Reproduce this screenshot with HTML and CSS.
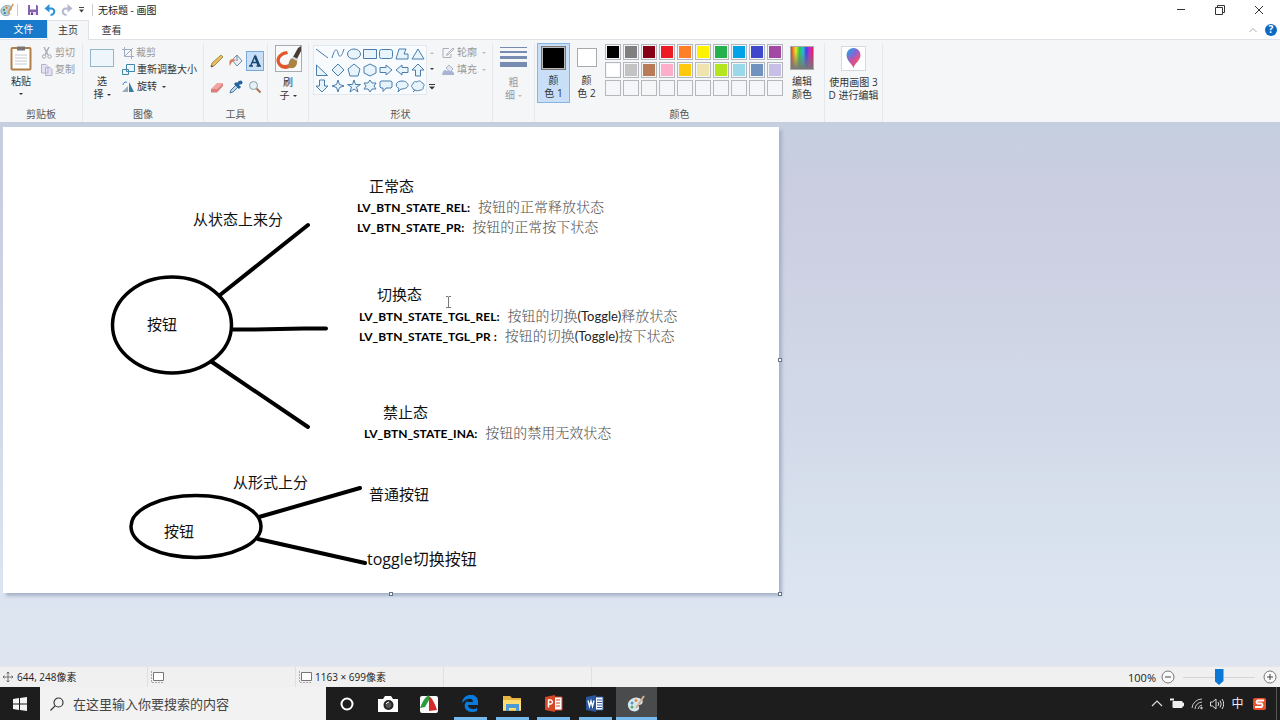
FILE: index.html
```html
<!DOCTYPE html>
<html lang="zh-CN">
<head>
<meta charset="utf-8">
<title>无标题 - 画图</title>
<link rel="stylesheet" href="styles.css">
</head>
<body>
<header class="titlebar">
  <svg class="app-icon" width="14" height="14" viewBox="0 0 16 16"><path d="M1 9C1 5 6 2 10 3c4 1 4 5 1 5.500s-1 2 0 3-1 3-4 3S1 13 1 9z" fill="#b9d3dc" stroke="#7e9ca8"/><circle cx="4.500" cy="8" r="1.300" fill="#4a9b51"/><circle cx="7.500" cy="5.500" r="1.300" fill="#e08a35"/><circle cx="5.500" cy="11.500" r="1.300" fill="#3a78c0"/><path d="M9 12 15 1" stroke="#d79a55" stroke-width="1.800"/></svg>
  <i class="bar"></i>
  <button class="quick" aria-label="保存"><svg width="12" height="12" viewBox="0 0 12 12"><path d="M1 1h9l1 1v9H1z" fill="#8460ad"/><path d="M3 1h6v4.500H3z" fill="#fff"/><path d="M3 8h6v3H3z" fill="#e5dced"/><path d="M4 8.500h2V11H4z" fill="#60408c"/></svg></button>
  <button class="quick" aria-label="撤消"><svg width="12" height="12" viewBox="0 0 12 12"><path d="M2.500 4.500h4.500c4.500 0 4.500 6-.5 6.500" fill="none" stroke="#2d92d6" stroke-width="2"/><path d="M5.500 0 .5 4.500l5 4z" fill="#2d92d6"/></svg></button>
  <button class="quick" aria-label="重做"><svg width="12" height="12" viewBox="0 0 12 12"><path d="M9.500 4.500H5c-4.500 0-4.500 6 .5 6.500" fill="none" stroke="#b4b8d0" stroke-width="2"/><path d="m6.500 0 5 4.500-5 4z" fill="#b4b8d0"/></svg></button>
  <button class="quick more" aria-label="自定义快速访问工具栏"><svg width="5" height="6" viewBox="0 0 5 6"><path d="M0 .5h5" stroke="#444"/><path d="M0 2.500h5L2.500 5.500z" fill="#444"/></svg></button>
  <i class="bar"></i>
  <h1>无标题 - 画图</h1>
  <div class="window-buttons">
    <button aria-label="最小化"><svg width="10" height="10" viewBox="0 0 10 10"><path d="M1 4.500h8" stroke="#333"/></svg></button>
    <button aria-label="还原"><svg width="10" height="10" viewBox="0 0 10 10" fill="none" stroke="#333"><path d="M.5 2.500h7v7h-7zM2.500 2.500v-2h7v7h-2"/></svg></button>
    <button aria-label="关闭"><svg width="10" height="10" viewBox="0 0 10 10"><path d="m1 1 8 8M9 1 1 9" stroke="#333"/></svg></button>
  </div>
</header>
<nav class="tabs">
  <button class="tab file">文件</button>
  <button class="tab active">主页</button>
  <button class="tab">查看</button>
  <div class="tab-tools">
    <button aria-label="折叠功能区"><svg width="8" height="6" viewBox="0 0 8 6"><path d="m.5 5 3.500-3.500L7.500 5" fill="none" stroke="#aaa"/></svg></button>
    <button class="help" aria-label="帮助">?</button>
  </div>
</nav>
<section class="ribbon">
  <div class="group clipboard">
    <div class="tools">
      <button class="big"><svg width="24" height="26" viewBox="0 0 24 26"><rect x="2.500" y="3" width="19" height="21.500" rx="1" fill="#fff" stroke="#b08048" stroke-width="2"/><path d="M8 1.500h8v4H8z" fill="#777"/><path d="M6 10h12M6 13h12M6 16h12M6 19h12" stroke="#c6cbd2"/></svg>粘贴<i class="caret"></i></button>
      <div class="stack">
        <button class="row off"><svg width="12" height="12" viewBox="0 0 12 12" fill="none" stroke="#a4a8b2"><path d="m3 0 4 8M8 0 4 8" stroke-width="1.300"/><circle cx="3" cy="9.500" r="1.700"/><circle cx="8.500" cy="9.500" r="1.700"/></svg>剪切</button>
        <button class="row off"><svg width="12" height="12" viewBox="0 0 12 12" fill="#e4e2f0" stroke="#b4b0cf"><path d="M.5.500H5l2 2V9H.5zM4.500 3.500H9l2 2v6H4.500z"/></svg>复制</button>
      </div>
    </div>
    <h2>剪贴板</h2>
  </div>
  <div class="group image">
    <div class="tools">
      <button class="big"><svg width="24" height="26" viewBox="0 0 24 26"><rect x=".5" y="4.500" width="23" height="17" fill="#eef5fb" stroke="#34779c" stroke-dasharray="1 1"/></svg>选<span>择<i class="caret"></i></span></button>
      <div class="stack">
        <button class="row off"><svg width="12" height="12" viewBox="0 0 12 12" fill="none" stroke="#9fabc0"><path d="M2.500 0v9.500H12M0 2.500h9.500V12M3 9l8-8"/></svg>裁剪</button>
        <button class="row"><svg width="13" height="12" viewBox="0 0 13 12" fill="#eaf5fb" stroke="#4186a8"><path d="M4.500.500h8v7h-8zM.5 5.500h6v5h-6z"/></svg>重新调整大小</button>
        <button class="row"><svg width="13" height="12" viewBox="0 0 13 12"><path d="M0 11h6V5z" fill="#9aaebb"/><path d="M7 11V1l5 10z" fill="#357f9d"/><path d="M1 4c0-2 1-3 4-3" fill="none" stroke="#3f7fca"/></svg>旋转<i class="caret"></i></button>
      </div>
    </div>
    <h2>图像</h2>
  </div>
  <div class="group draw">
    <div class="tools tool-grid">
      <button aria-label="铅笔"><svg width="14" height="14" viewBox="0 0 14 14"><path d="m1 13 1-4 9-8 2 2-9 9z" fill="#e6bd5b" stroke="#8b6832" stroke-width=".7"/><path d="m1 13 .6-2 1.400 1.300z" fill="#333"/></svg></button>
      <button aria-label="填充"><svg width="14" height="14" viewBox="0 0 14 14"><path d="m3 6 5-5 5 6-5 5z" fill="#e8eef3" stroke="#6f8da5"/><path d="M8 1v6" stroke="#6f8da5"/><path d="M3 5C0 6 0 9 1 12c1-3 2-5 7-6" fill="#d97c62"/></svg></button>
      <button class="selected" aria-label="文本"><svg width="14" height="14" viewBox="0 0 14 14"><path d="m2.500 12 4.500-10 4.500 10M4.500 8.500H9M1 12h4M8.500 12H13" fill="none" stroke="#174771" stroke-width="1.400"/><path d="m7 2 4 10" stroke="#174771" stroke-width="2.500"/></svg></button>
      <button aria-label="橡皮擦"><svg width="14" height="14" viewBox="0 0 14 14"><path d="m1 9 6-6h6l-6 6z" fill="#f2a4a0"/><path d="M1 9h6v3.500H1zM7 9l6-6v3l-6 6.500z" fill="#dc7e7c"/></svg></button>
      <button aria-label="颜色选取器"><svg width="14" height="14" viewBox="0 0 14 14"><path d="m1 13 1-3 5-5 2 2-5 5z" fill="#b9d9ee" stroke="#52789a"/><path d="m6 3 5 5M8 5l3-3" stroke="#27639b" stroke-width="3"/><circle cx="11.500" cy="2.500" r="2" fill="#27639b"/></svg></button>
      <button aria-label="放大镜"><svg width="14" height="14" viewBox="0 0 14 14"><path d="m8.500 8.500 4 4" stroke="#a9744d" stroke-width="2"/><circle cx="5.500" cy="5.500" r="4" fill="#e5f1f8" stroke="#8e9ba5"/></svg></button>
    </div>
    <h2>工具</h2>
  </div>
  <div class="group brush">
    <div class="tools">
      <button class="big"><svg width="27" height="27" viewBox="0 0 27 27"><rect x=".5" y=".5" width="26" height="26" fill="#f8f9fb" stroke="#a5acb8"/><path d="M12 6C4 7 0 13 2 18c3 7 10 7 14 4l-2-3c-4 2-8 1-9-2-1-4 2-7 8-8z" fill="#e2572b"/><path d="M14 17c1-4 4-5 7-4 2 3 1 7-1 9s-6 1-7 0z" fill="#a98343"/><path d="M26 1v5l-4 8-4-2 5-9z" fill="#483b35"/><path d="m17.500 12.500 5 2.500" stroke="#cfd2d6" stroke-width="2"/></svg>刷<span>子<i class="caret"></i></span></button>
    </div>
  </div>
  <div class="group shapes">
    <div class="tools">
      <div class="gallery">
        <button aria-label="直线"><svg viewBox="0 0 14 14"><path d="m1 2 12 9"/></svg></button>
        <button aria-label="曲线"><svg viewBox="0 0 14 14"><path d="M1 11C4 0 6 2 7 6s3 6 6-4" fill="none"/></svg></button>
        <button aria-label="椭圆形"><svg viewBox="0 0 14 14"><ellipse cx="7" cy="7" rx="6.500" ry="5"/></svg></button>
        <button aria-label="矩形"><svg viewBox="0 0 14 14"><path d="M.5 2.500h13v9H.5z"/></svg></button>
        <button aria-label="圆角矩形"><svg viewBox="0 0 14 14"><rect x=".5" y="2.500" width="13" height="9" rx="2"/></svg></button>
        <button aria-label="多边形"><svg viewBox="0 0 14 14"><path d="M4 2h7L9 7h4v5H1z"/></svg></button>
        <button aria-label="三角形"><svg viewBox="0 0 14 14"><path d="m7 2 6 10H1z"/></svg></button>
        <button aria-label="直角三角形"><svg viewBox="0 0 14 14"><path d="M1.500 2v10.500h11z"/></svg></button>
        <button aria-label="菱形"><svg viewBox="0 0 14 14"><path d="m7 1 6 6-6 6-6-6z"/></svg></button>
        <button aria-label="五边形"><svg viewBox="0 0 14 14"><path d="m7 1 6 5-2 7H3L1 6z"/></svg></button>
        <button aria-label="六边形"><svg viewBox="0 0 14 14"><path d="m7 1 6 3v6l-6 3-6-3V4z"/></svg></button>
        <button aria-label="右箭头"><svg viewBox="0 0 14 14"><path d="M1 4.500h6V2l6 5-6 5V9.500H1z"/></svg></button>
        <button aria-label="左箭头"><svg viewBox="0 0 14 14"><path d="M13 4.500H7V2L1 7l6 5V9.500h6z"/></svg></button>
        <button aria-label="上箭头"><svg viewBox="0 0 14 14"><path d="M4.500 13V7H1l6-6 6 6H9.500v6z"/></svg></button>
        <button aria-label="下箭头"><svg viewBox="0 0 14 14"><path d="M4.500 1v6H1l6 6 6-6H9.500V1z"/></svg></button>
        <button aria-label="四角星"><svg viewBox="0 0 14 14"><path d="m7 1 1.500 4.500L13 7 8.500 8.500 7 13 5.500 8.500 1 7l4.500-1.500z"/></svg></button>
        <button aria-label="五角星"><svg viewBox="0 0 14 14"><path d="m7 1 1.500 4.500h5L9.500 8l1.500 5-4-3-4 3 1.500-5-4-2.500h5z"/></svg></button>
        <button aria-label="六角星"><svg viewBox="0 0 14 14"><path d="m7 1 2 3h4l-2 3 2 3H9l-2 3-2-3H1l2-3-2-3h4z"/></svg></button>
        <button aria-label="圆角矩形标注"><svg viewBox="0 0 14 14"><path d="M2 2h10l1 1v5l-1 1H7l-3 3.500V9H2L1 8V3z"/></svg></button>
        <button aria-label="椭圆形标注"><svg viewBox="0 0 14 14"><path d="M4 9.500C-1 7 1 2 7 2s8 5 4 7c-2 1-4 1-5 1l-3 3z"/></svg></button>
        <button aria-label="云形标注"><svg viewBox="0 0 14 14"><path d="M4 11c-2 0-2-1-2-2-2-1-2-3 0-4 0-2 2-3 4-2 2-2 4-1 5 1 2 0 3 3 1 4 1 2-1 3-3 3-1 1-4 1-5 0l-2 2z"/></svg></button>
      </div>
      <div class="scroll"><i class="caret up"></i><i class="caret"></i><svg width="6" height="6" viewBox="0 0 6 6"><path d="M0 .5h6" stroke="#333"/><path d="M0 2.500h6l-3 3z" fill="#333"/></svg></div>
      <div class="stack">
        <button class="row off"><svg width="13" height="12" viewBox="0 0 13 12" fill="none" stroke="#a9afb8"><path d="M7 1.500H1v9h8V7"/><path d="m4 8 7-7 1 1-6 6z"/></svg>轮廓<i class="caret"></i></button>
        <button class="row off"><svg width="13" height="12" viewBox="0 0 13 12"><path d="M0 11c1-5 3-6 5-4l3-2 4 4v2z" fill="#a7b4d4"/><path d="m4 4 3-3 4 4-3 3z" fill="#e2e5ee" stroke="#a7b4d4"/></svg>填充<i class="caret"></i></button>
      </div>
    </div>
    <h2>形状</h2>
  </div>
  <div class="group size">
    <div class="tools">
      <button class="big off"><svg width="27" height="27" viewBox="0 0 27 27" fill="#788bb0"><path d="M0 2h27v1H0zM0 6h27v2H0zM0 11h27v3H0zM0 17h27v5H0z"/></svg>粗<span>细<i class="caret"></i></span></button>
    </div>
  </div>
  <div class="group colors">
    <div class="tools">
      <button class="big slot chosen"><i class="swatch black"></i>颜<span>色 1</span></button>
      <button class="big slot second"><i class="swatch white"></i>颜<span>色 2</span></button>
      <div class="palette">
        <button class="black" aria-label="黑色"></button><button class="gray" aria-label="灰色-50%"></button><button class="maroon" aria-label="深红色"></button><button class="red" aria-label="红色"></button><button class="orange" aria-label="橙色"></button><button class="yellow" aria-label="黄色"></button><button class="green" aria-label="绿色"></button><button class="blue" aria-label="青绿"></button><button class="indigo" aria-label="靛蓝"></button><button class="purple" aria-label="紫色"></button>
        <button class="white" aria-label="白色"></button><button class="silver" aria-label="灰色-25%"></button><button class="brown" aria-label="褐色"></button><button class="pink" aria-label="玫瑰色"></button><button class="gold" aria-label="金色"></button><button class="cream" aria-label="浅黄色"></button><button class="lime" aria-label="酸橙色"></button><button class="sky" aria-label="淡青绿色"></button><button class="steel" aria-label="蓝灰色"></button><button class="lavender" aria-label="淡紫色"></button>
        <button aria-label="自定义 1"></button><button aria-label="自定义 2"></button><button aria-label="自定义 3"></button><button aria-label="自定义 4"></button><button aria-label="自定义 5"></button><button aria-label="自定义 6"></button><button aria-label="自定义 7"></button><button aria-label="自定义 8"></button><button aria-label="自定义 9"></button><button aria-label="自定义 10"></button>
      </div>
      <button class="big edit"><i class="spectrum"></i>编辑<span>颜色</span></button>
    </div>
    <h2>颜色</h2>
  </div>
  <div class="group paint3d">
    <div class="tools">
      <button class="big"><svg width="27" height="27" viewBox="0 0 27 27"><defs><linearGradient id="drop" x1="0" y1="0" x2="1" y2="1"><stop offset="0" stop-color="#18aee5"/><stop offset=".45" stop-color="#8a63d2"/><stop offset=".7" stop-color="#e4568d"/><stop offset="1" stop-color="#f7a928"/></linearGradient></defs><rect x="1.500" y="1.500" width="24" height="24" fill="#fff" stroke="#d6d9de"/><path d="M13.500 23c-1-4-7-7-7-13a7 7 0 0 1 14 0c0 6-6 8-7 13z" fill="url(#drop)"/><path d="M8 11c3 4 8 2 12-3 1 6-6 9-6.500 15-1-5-5-7-5.500-12z" fill="#e04f83" opacity=".65"/></svg>使用画图 3<span>D 进行编辑</span></button>
    </div>
  </div>
</section>
<main class="workspace">
  <div class="canvas">
    <svg class="ink" width="776" height="466" viewBox="3 127 776 466" fill="none" stroke="#000" stroke-width="4" stroke-linecap="round" stroke-linejoin="round"><ellipse cx="172" cy="325" rx="59.500" ry="48" stroke-width="3.500"/><path d="m220 295 88-70M233 329.500l22 0 49-1h22M212 362l96 65M259 517l101-29M258 539l107 24"/><ellipse cx="196" cy="526.500" rx="65" ry="31" stroke-width="3.500"/></svg>
    <p class="node n1">从状态上来分</p>
    <p class="node n2">按钮</p>
    <p class="node n3">正常态</p>
    <div class="node list n4">
      <p><b>LV_BTN_STATE_REL:</b><span>按钮的正常释放状态</span></p>
      <p><b>LV_BTN_STATE_PR:</b><span>按钮的正常按下状态</span></p>
    </div>
    <p class="node n5">切换态</p>
    <div class="node list n6">
      <p><b>LV_BTN_STATE_TGL_REL:</b><span>按钮的切换<em>(Toggle)</em>释放状态</span></p>
      <p><b>LV_BTN_STATE_TGL_PR :</b><span>按钮的切换<em>(Toggle)</em>按下状态</span></p>
    </div>
    <p class="node n7">禁止态</p>
    <div class="node list n8">
      <p><b>LV_BTN_STATE_INA:</b><span>按钮的禁用无效状态</span></p>
    </div>
    <p class="node n9">从形式上分</p>
    <p class="node n10">按钮</p>
    <p class="node n11">普通按钮</p>
    <p class="node n12">toggle切换按钮</p>
    <svg class="cursor" width="7" height="12" viewBox="0 0 7 12"><path d="M1 .5h2l.5.500.500-.5h2M3.500 1v10M1 11.500h5" fill="none" stroke="#777"/></svg>
    <i class="handle east"></i><i class="handle south"></i><i class="handle corner"></i>
  </div>
</main>
<footer class="status">
  <div class="cell"><svg width="12" height="12" viewBox="0 0 12 12" fill="none" stroke="#555"><path d="M6 1v10M1 6h10M4.500 2.500 6 1l1.500 1.500M4.500 9.500 6 11l1.500-1.500M2.500 4.500 1 6l1.500 1.500M9.500 4.500 11 6 9.500 7.500" stroke-width=".8"/></svg>644, 248像素</div>
  <div class="cell"><svg width="13" height="12" viewBox="0 0 13 12" fill="none" stroke="#777"><path d="M2.500 1.500h10v8h-10z" fill="#fff"/><path d="M.5 0v11.500H12" stroke="#aaa" stroke-dasharray="2 1"/></svg></div>
  <div class="cell"><svg width="13" height="12" viewBox="0 0 13 12" fill="none" stroke="#777"><path d="M2.500 1.500h10v8h-10z" fill="#fff"/><path d="M.5 0v11.500H12" stroke="#aaa" stroke-dasharray="2 1"/></svg>1163 × 699像素</div>
  <div class="cell"></div>
  <div class="zoom">
    <label for="zoom">100%</label>
    <button aria-label="缩小"><svg width="14" height="14" viewBox="0 0 14 14" fill="#fafafa" stroke="#777"><circle cx="7" cy="7" r="6"/><path d="M4 7h6" stroke="#444"/></svg></button>
    <input id="zoom" type="range" min="0" max="100" value="50">
    <button aria-label="放大"><svg width="14" height="14" viewBox="0 0 14 14" fill="#fafafa" stroke="#777"><circle cx="7" cy="7" r="6"/><path d="M4 7h6M7 4v6" stroke="#444"/></svg></button>
  </div>
</footer>
<footer class="taskbar">
  <button class="start" aria-label="开始"><svg width="14" height="14" viewBox="0 0 14 14" fill="#f4f4f4"><path d="m0 2 6-1v5.500H0zM7 .9 14 0v6.500H7zM0 7.500h6V13l-6-1zM7 7.500h7V14l-7-.9z"/></svg></button>
  <label class="search"><svg width="14" height="14" viewBox="0 0 14 14" fill="none" stroke="#333" stroke-width="1.200"><circle cx="8.500" cy="5.500" r="4.500"/><path d="M5.300 8.700.500 13.500"/></svg><input type="text" placeholder="在这里输入你要搜索的内容" aria-label="搜索"></label>
  <div class="apps">
    <button class="app" aria-label="Cortana"><svg width="14" height="14" viewBox="0 0 14 14"><circle cx="7" cy="7" r="5.500" fill="none" stroke="#fff" stroke-width="2"/></svg></button>
    <button class="app" aria-label="相机"><svg width="20" height="18" viewBox="0 0 20 18"><path d="M0 4h5l2-3h6l2 3h5v13H0z" fill="#fff"/><circle cx="10.500" cy="10" r="5" fill="#222"/><circle cx="10.500" cy="10" r="3" fill="#555"/><path d="M8 9q1-2 3-2" stroke="#fff" fill="none"/></svg></button>
    <button class="app" aria-label="录屏"><svg width="19" height="18" viewBox="0 0 19 18"><rect y="1" width="18" height="17" rx="2" fill="#fafafa"/><path d="M9 0v5L5 12 0 13C2 8 4 3 9 0z" fill="#2d9c3d"/><path d="M9 1c4 3 6 8 8 14l-8 1z" fill="#d32929"/></svg></button>
    <button class="app open" aria-label="Edge"><svg width="17" height="17" viewBox="0 0 17 17"><path d="M0 8C1-3 17-3 16 8v2H6c0 4 6 5 9 3v3C8 19 1 15 3 9c1-3 4-4 4-4S5 6 5.500 7H11c0-5-7-4-11 1z" fill="#087bdc"/></svg></button>
    <button class="app open" aria-label="文件资源管理器"><svg width="19" height="16" viewBox="0 0 19 16"><path d="M0 0h7l2 2h9v13H0z" fill="#e8b63f"/><path d="M0 4h18v10H0z" fill="#ffdc72"/><path d="M3 8h13v7h-3v-3H6v3H3z" fill="#4c9bd4"/></svg></button>
    <button class="app open" aria-label="PowerPoint"><svg width="18" height="17" viewBox="0 0 18 17"><path d="M8 2h9v13H8z" fill="#fff" stroke="#d24726"/><path d="M0 2 10 0v17L0 15z" fill="#d24726"/><path d="M3.500 12.500V5H6q3 2 0 4H3.500" fill="none" stroke="#fff" stroke-width="1.500"/><path d="M11 5h4M11 8h4M11 11h4" stroke="#d24726"/></svg></button>
    <button class="app open" aria-label="Word"><svg width="18" height="17" viewBox="0 0 18 17"><path d="M8 2h9v13H8z" fill="#fff" stroke="#2b579a"/><path d="M0 2 10 0v17L0 15z" fill="#2b579a"/><path d="m2 5.500 1.500 6L5 6l1.500 5.500L8 5.500" fill="none" stroke="#fff" stroke-width="1.300"/><path d="M11 5h5M11 7.500h5M11 10h5M11 12.500h5" stroke="#2b579a"/></svg></button>
    <button class="app open current" aria-label="画图"><svg width="19" height="18" viewBox="0 0 19 18"><path d="M1 11C0 5 7 1 12 3c6 2 4 7 0 7-2 0 1 2 0 4-2 4-10 3-11-3z" fill="#d6e7ef"/><circle cx="5" cy="8" r="1.500" fill="#5596c6"/><circle cx="9" cy="5.500" r="1.500" fill="#de8c41"/><circle cx="5" cy="12" r="1.500" fill="#4cac71"/><path d="m9 13 8-12" stroke="#d4b08d" stroke-width="2"/></svg></button>
  </div>
  <div class="tray">
    <button aria-label="显示隐藏的图标"><svg width="12" height="14" viewBox="0 0 12 14"><path d="m1 9 5-5 5 5" fill="none" stroke="#ddd" stroke-width="1.200"/></svg></button>
    <button aria-label="电池"><svg width="14" height="12" viewBox="0 0 14 12"><path d="M3 3.500h9v6H3zM12 5h1.500v3H12z" fill="#eee" stroke="#eee"/><path d="M0 1.500h4M1 0v3M3 0v3" stroke="#eee"/></svg></button>
    <button aria-label="无线网络"><svg width="13" height="13" viewBox="0 0 13 13" fill="none" stroke="#ccc"><path d="M1 11A10 10 0 0 1 11 2M4 12a8 8 0 0 1 7-7M7 12a5 5 0 0 1 4-4"/><circle cx="10.500" cy="11" r=".8" fill="#fff"/></svg></button>
    <button aria-label="音量"><svg width="14" height="12" viewBox="0 0 14 12" fill="none" stroke="#ddd"><path d="M.5 4h2L6 1v10L2.500 8h-2zM8 4q1.500 2 0 4M10 2.500q2.500 3.500 0 7M12 1q3.500 5 0 10"/></svg></button>
    <button class="lang">中</button>
    <button class="sogou" aria-label="搜狗输入法"><svg width="14" height="14" viewBox="0 0 14 14"><rect y="1" width="13" height="12" rx="2" fill="#e8502d"/><path d="M11 3.500H4.500q-2 1.500 0 3h4q2 1.500 0 3.500H2" fill="none" stroke="#fff" stroke-width="1.800"/></svg></button>
  </div>
</footer>
</body>
</html>
```
FILE: styles.css
```css
* { box-sizing: border-box; }
body { margin: 0; min-height: 100vh; display: flex; flex-direction: column; background: #fff; color: #333; font: 10px/13px "Open Sans", "Noto Sans CJK SC", sans-serif; }
button { display: flex; align-items: center; justify-content: center; margin: 0; padding: 0; border: 0; background: none; color: inherit; font: inherit; }
svg { display: block; flex: none; }
h1, h2, p { margin: 0; font-size: inherit; font-weight: 400; }

.titlebar { display: flex; align-items: center; height: 20px; }
.titlebar .bar { width: 1px; height: 12px; margin: 0 6px 0 3px; background: #ccc; }
.quick { width: 17px; }
.quick.more { width: 12px; }
.titlebar .quick + .bar { margin: 0 5px 0 5px; }
.titlebar h1 { color: #222; }
.window-buttons { display: flex; margin-left: auto; padding-right: 2px; }
.window-buttons button { width: 39px; height: 18px; }

.tabs { display: flex; height: 20px; border-bottom: 1px solid #dfe2e6; }
.tab { width: 42px; height: 20px; color: #333; }
.tab.file { width: 47px; height: 18px; background: #1979ca; color: #fff; }
.tab.active { border: 1px solid #dfe2e6; border-width: 1px 1px 0; background: #f5f6f8; }
.tab:nth-child(3) { width: 45px; }
.tab-tools { display: flex; align-items: center; gap: 8px; margin-left: auto; padding-right: 3px; }
.help { width: 12px; height: 12px; border-radius: 50%; background: #0c6ac4; color: #fff; font-weight: 700; }

.ribbon { display: flex; height: 83px; padding-top: 3px; background: #f4f6f8; border-bottom: 1px solid #c3ceda; }
.group { display: flex; flex-direction: column; flex: none; border-right: 1px solid #e5e8ec; }
.tools { display: flex; align-items: flex-start; flex: 1; }
.group h2 { padding-bottom: 1px; text-align: center; color: #555; }
.big { flex-direction: column; width: 32px; }
.big svg { margin: 2px 0 4px; }
.big span { display: flex; align-items: center; white-space: nowrap; }
.caret { display: block; border: 2px solid transparent; border-top: 2px solid #333; border-bottom: 0; margin-left: 3px; }
.big > .caret { margin: 5px 0; }
.caret.up { border-top: 0; border-bottom: 2px solid #bbb; }
.stack { display: flex; flex-direction: column; align-items: flex-start; padding-top: 1px; }
.row { height: 17px; gap: 2px; white-space: nowrap; }
.off { color: #999; }
.off .caret { border-top-color: #bbb; }

.clipboard { width: 83px; }
.clipboard .tools { padding-left: 5px; gap: 4px; }
.image { width: 121px; }
.image .tools { padding-left: 3px; gap: 4px; }
.draw { width: 64px; }
.tool-grid { display: grid; grid-template-columns: repeat(3, 19px); grid-auto-rows: 20px; row-gap: 6px; padding: 8px 0 0 4px; align-content: start; }
.tool-grid button { width: 18px; height: 20px; }
.tool-grid .selected { background: #c9dff6; border: 1px solid #78a9db; }
.brush { width: 41px; }
.brush .tools, .size .tools { justify-content: center; }
.shapes { width: 184px; }
.shapes .tools { padding-left: 4px; }
.gallery { display: grid; grid-template-columns: repeat(7, 16px); grid-auto-rows: 16px; margin-top: 2px; border: 1px solid #e3e8ee; background: #f8fbfd; }
.gallery svg { width: 14px; height: 14px; fill: #e7f4fc; stroke: #4a7dac; }
.scroll { display: flex; flex-direction: column; align-items: center; justify-content: space-between; width: 9px; height: 50px; padding: 9px 0 3px; margin-right: 6px; }
.scroll .caret { margin: 0; }
.size { width: 42px; }
.colors { width: 290px; }
.colors .tools { padding-left: 2px; }
.slot { width: 33px; height: 60px; padding: 2px 0; border: 1px solid transparent; justify-content: flex-start; }
.slot.chosen { background: #c9dff7; border-color: #86b4e4; }
.swatch { width: 25px; height: 25px; margin-bottom: 4px; border: 1px solid #777; box-shadow: inset 0 0 0 1px #bbb; }
.second .swatch { width: 20px; height: 20px; margin: 2px 0 7px; box-shadow: none; border-color: #aaa; }
.palette { display: grid; grid-template-columns: repeat(10, 16px); grid-auto-rows: 16px; gap: 2px; margin: 1px 0 0 2px; }
.palette button { border: 1px solid #b4b8be; box-shadow: inset 0 0 0 1px #f4f6f8; }
.edit { margin-left: 3px; }
.spectrum { width: 24px; height: 24px; margin: 3px 0 5px; border: 1px solid #aaa; background: linear-gradient(transparent 20%, #777), linear-gradient(90deg, #e03c24, #f1e629 22%, #2ec840 38%, #27b9dc 55%, #4141dd 70%, #ce27c9 85%, #e22252); }
.paint3d { width: 58px; }
.paint3d .big { width: 57px; }
.black { background: #000; } .gray { background: #7f7f7f; } .maroon { background: #880015; } .red { background: #ed1c24; } .orange { background: #ff7f27; } .yellow { background: #fff200; } .green { background: #22b14c; } .blue { background: #00a2e8; } .indigo { background: #3f48cc; } .purple { background: #a349a4; }
.white { background: #fff; } .silver { background: #c3c3c3; } .brown { background: #b97a57; } .pink { background: #ffaec9; } .gold { background: #ffc90e; } .cream { background: #efe4b0; } .lime { background: #b5e61d; } .sky { background: #99d9ea; } .steel { background: #7092be; } .lavender { background: #c8bfe7; }

.workspace { flex: 1; padding: 4px 0 0 3px; background: linear-gradient(#c5cfdf, #cbcde0 14%, #cfd4e5 36%, #d2dae9 55%, #dbe4f0 85%, #dee5f1); }
.canvas { position: relative; width: 776px; height: 466px; background: #fff; box-shadow: 3px 3px 3px #a8b4c8; }
.ink { position: absolute; inset: 0; }
.node { position: absolute; color: #111; font-size: 15px; line-height: 20px; white-space: nowrap; }
.list { font-size: 12px; line-height: 20px; }
.list p { display: flex; align-items: baseline; gap: 8px; height: 20px; }
.list b { font-family: Lato, sans-serif; font-weight: 700; color: #000; }
.list span { font-family: "Noto Serif CJK SC", "Noto Sans CJK SC", serif; font-size: 14px; font-weight: 300; color: #555; }
.list em { font-family: Lato, sans-serif; font-size: 13px; font-style: normal; font-weight: 400; color: #222; }
.n1 { left: 190px; top: 82px; }
.n2 { left: 144px; top: 187px; }
.n3 { left: 366px; top: 49px; }
.n4 { left: 354px; top: 69px; }
.n5 { left: 374px; top: 157px; }
.n6 { left: 356px; top: 178px; }
.n7 { left: 380px; top: 275px; }
.n8 { left: 361px; top: 295px; }
.n9 { left: 230px; top: 345px; }
.n10 { left: 161px; top: 394px; }
.n11 { left: 366px; top: 357px; }
.n12 { left: 364px; top: 422px; font-size: 16px; }
.cursor { position: absolute; left: 442px; top: 169px; }
.handle { position: absolute; width: 4px; height: 4px; border: 1px solid #667487; background: #fff; }
.east { left: 775px; top: 231px; }
.south { left: 386px; top: 465px; }
.corner { left: 775px; top: 465px; }

.status { display: flex; height: 21px; background: #f0f0f0; border-top: 1px solid #e4e6ea; color: #222; }
.cell { display: flex; align-items: center; gap: 3px; width: 148px; padding-left: 2px; border-right: 1px solid #e0e0e0; }
.cell + .cell { padding-left: 3px; }
.zoom { display: flex; align-items: center; gap: 5px; margin-left: auto; padding-right: 3px; }
.zoom label { font-size: 11px; }
.zoom input { appearance: none; width: 72px; height: 16px; margin: 0 3px; background: linear-gradient(#d5d5d5, #d5d5d5) center / 100% 1px no-repeat; }
.zoom input::-webkit-slider-thumb { appearance: none; width: 9px; height: 16px; background: #0a78d4; clip-path: polygon(0 0, 100% 0, 100% 75%, 50% 100%, 0 75%); }

.taskbar { display: flex; height: 33px; background: #1d1d1d; color: #eee; }
.start { width: 40px; }
.search { display: flex; align-items: center; gap: 9px; width: 286px; padding-left: 10px; background: #f2f2f2; }
.search input { flex: 1; min-width: 0; padding: 0; border: 0; outline: 0; background: none; color: #333; font: 13px/20px "Noto Sans CJK SC", sans-serif; }
.search input::placeholder { color: #444; opacity: 1; }
.apps { display: flex; justify-content: space-between; width: 331px; padding-left: 4px; }
.app { width: 33px; border: solid transparent; border-width: 3px 0; }
.app.open { border-bottom-color: #76b9ed; }
.app.current { width: 41px; margin-left: -4px; background: #494b4d; }
.tray { display: flex; margin-left: auto; padding-right: 3px; }
.tray button { width: 20px; }
.tray .lang { width: 21px; font-size: 12px; }
.tray .sogou { width: 29px; padding-right: 5px; border-right: 1px solid #555; }
```
